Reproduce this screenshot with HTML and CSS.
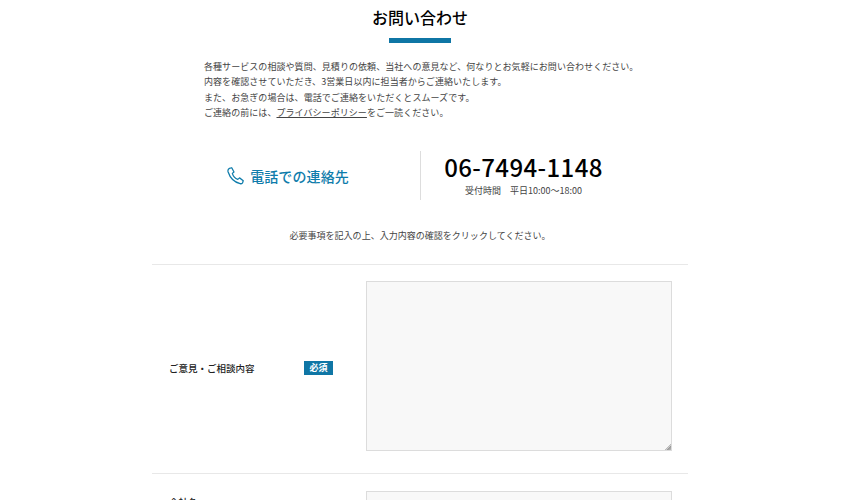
FILE: index.html
```html
<!DOCTYPE html>
<html lang="ja">
<head>
<meta charset="utf-8">
<title>お問い合わせ</title>
<link rel="stylesheet" href="styles.css">
</head>
<body>
<main class="page">
  <h1 class="title">お問い合わせ</h1>
  <div class="title-bar"></div>
  <div class="intro">
    <p>各種サービスの相談や質問、見積りの依頼、当社への意見など、何なりとお気軽にお問い合わせください。</p>
    <p>内容を確認させていただき、3営業日以内に担当者からご連絡いたします。</p>
    <p>また、お急ぎの場合は、電話でご連絡をいただくとスムーズです。</p>
    <p>ご連絡の前には、<a href="#" class="link">プライバシーポリシー</a>をご一読ください。</p>
  </div>
  <section class="tel">
    <div class="tel-left">
      <svg class="tel-icon" viewBox="0 0 24 24" width="18" height="18" fill="none" stroke="currentColor" stroke-width="1.7" stroke-linejoin="round"><path d="M3.2 1.8 6.3 1l3 5.6-2.2 1.9c.9 3 4.300 6.900 7.300 8l2.300-2 5 3.700-.9 2.700c-.5 1.200-2 1.600-3.300 1.200C10 20.300 3.800 13.700 1.400 6.300 1 4.500 1.800 2.500 3.200 1.800Z"/></svg>
      <span class="tel-label">電話での連絡先</span>
    </div>
    <div class="tel-right">
      <div class="tel-number">06-7494-1148</div>
      <div class="tel-hours">受付時間　平日10:00～18:00</div>
    </div>
  </section>
  <p class="notice">必要事項を記入の上、入力内容の確認をクリックしてください。</p>
  <form class="form">
    <div class="row">
      <div class="label-cell"><span class="label">ご意見・ご相談内容</span><span class="badge">必須</span></div>
      <textarea class="textarea"></textarea>
    </div>
    <div class="row row-next">
      <div class="label-cell label-cell-top"><span class="label">会社名</span></div>
      <input class="input" type="text">
    </div>
  </form>
</main>
</body>
</html>
```
FILE: styles.css
```css
* { box-sizing: border-box; }
html, body { margin: 0; padding: 0; height: 500px; overflow: hidden; background: #fff; }
body { font-family: "Noto Sans CJK JP", "Noto Sans", sans-serif; color: #444; }
.page { width: 536px; margin-left: 152px; }
.title { margin: 0; padding-top: 4px; height: 38px; text-align: center; font-size: 16px; line-height: 26px; font-weight: 500; color: #000; }
.title-bar { width: 62px; height: 5px; margin: 0 auto; background: #0f76a5; }
.intro { margin: 15.6px 0 0 52px; font-size: 9px; letter-spacing: 0.06px; line-height: 15.6px; color: #444; }
.intro p { margin: 0; white-space: nowrap; }
.link { color: #444; text-decoration: underline; }
.tel { display: flex; align-items: stretch; height: 49px; margin-top: 30.4px; }
.tel-left { width: 269px; border-right: 1px solid #ddd; display: flex; align-items: center; justify-content: center; gap: 5px; color: #0f7cab; padding-left: 4px; }
.tel-icon { flex: none; }
.tel-label { font-size: 14px; font-weight: 500; letter-spacing: 0.1px; line-height: 20px; }
.tel-right { width: 205px; text-align: center; }
.tel-number { font-size: 24px; font-weight: 500; line-height: 32px; letter-spacing: 0.4px; color: #000; }
.tel-hours { font-size: 9px; line-height: 12px; margin-top: 2px; color: #444; }
.notice { margin: 29px 0 0; text-align: center; font-size: 9px; letter-spacing: 0.02px; line-height: 14px; color: #444; }
.form { margin-top: 21px; }
.row { display: grid; grid-template-columns: 214px 306px; align-items: center; border-top: 1px solid #e8e8e8; padding: 16px 0 22px; }
.row-next { padding-top: 17px; align-items: start; }
.label-cell { display: flex; align-items: center; padding: 4px 0 0 17px; }
.label-cell-top { padding-top: 4px; }
.label { width: 135px; font-size: 9.500px; font-weight: 500; line-height: 14px; color: #222; }
.badge { width: 29px; height: 14px; background: #0f76a5; color: #fff; font-size: 9px; font-weight: 700; line-height: 14px; text-align: center; }
.textarea { display: block; width: 306px; height: 170px; margin: 0; background: #f8f8f8; border: 1px solid #dcdcdc; border-radius: 0; padding: 4px; }
.textarea::-webkit-resizer { background: linear-gradient(135deg, transparent 50%, #aaa 50%, #ddd 70%, #999 70%, #bbb 100%) no-repeat right bottom / 7px 7px; }
.input { display: block; width: 306px; height: 25px; margin: 0; background: #f8f8f8; border: 1px solid #dcdcdc; border-radius: 0; }
```
